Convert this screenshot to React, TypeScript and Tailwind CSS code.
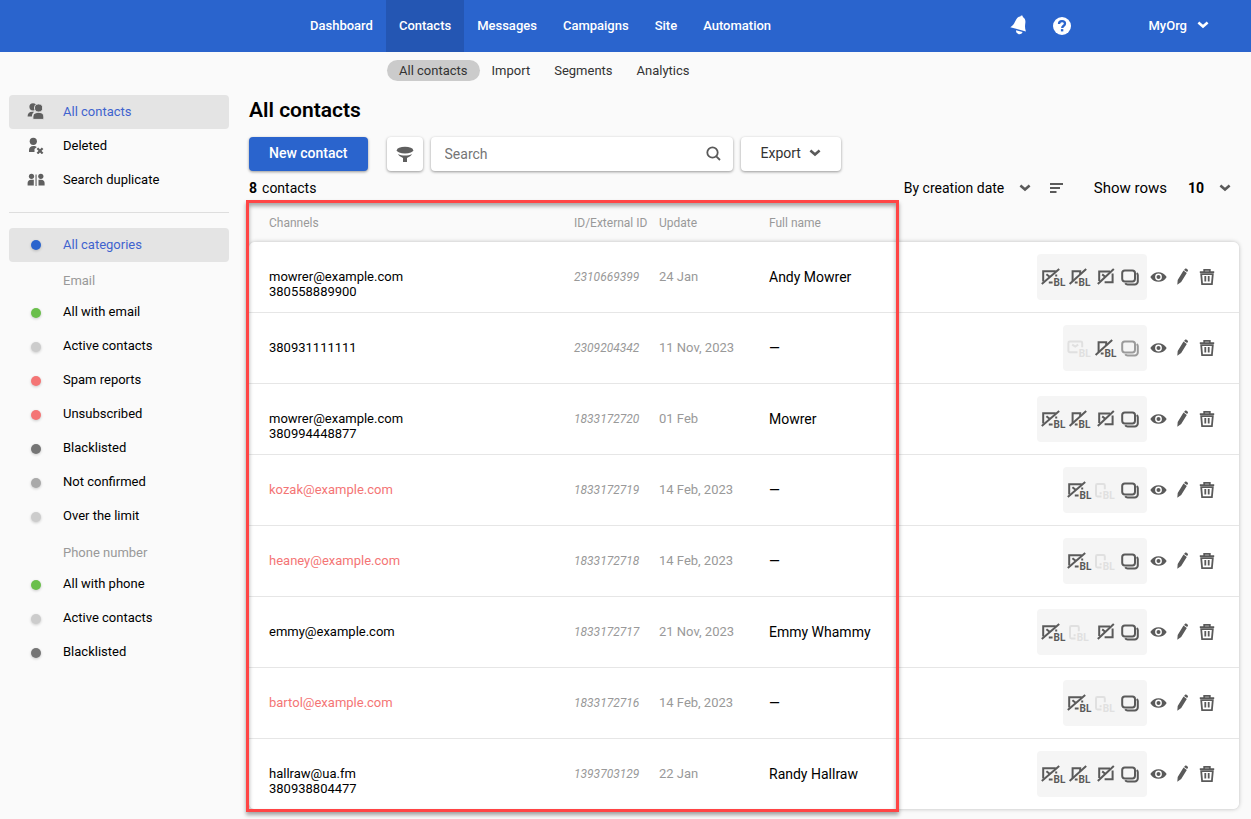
import React from "react";

type Tone = "on" | "off" | "mid";

interface Contact {
  channels: string[];
  id: string;
  updated: string;
  name: string;
  failed?: boolean;
  icons: { kind: "email" | "phone" | "inbox" | "devices"; tone: Tone }[];
}

const full: Contact["icons"] = [
  { kind: "email", tone: "on" },
  { kind: "phone", tone: "on" },
  { kind: "inbox", tone: "on" },
  { kind: "devices", tone: "on" },
];
const emailOnly: Contact["icons"] = [
  { kind: "email", tone: "on" },
  { kind: "phone", tone: "off" },
  { kind: "devices", tone: "on" },
];

const contacts: Contact[] = [
  { channels: ["mowrer@example.com", "380558889900"], id: "2310669399", updated: "24 Jan", name: "Andy Mowrer", icons: full },
  {
    channels: ["380931111111"],
    id: "2309204342",
    updated: "11 Nov, 2023",
    name: "—",
    icons: [
      { kind: "email", tone: "off" },
      { kind: "phone", tone: "on" },
      { kind: "devices", tone: "mid" },
    ],
  },
  { channels: ["mowrer@example.com", "380994448877"], id: "1833172720", updated: "01 Feb", name: "Mowrer", icons: full },
  { channels: ["kozak@example.com"], id: "1833172719", updated: "14 Feb, 2023", name: "—", failed: true, icons: emailOnly },
  { channels: ["heaney@example.com"], id: "1833172718", updated: "14 Feb, 2023", name: "—", failed: true, icons: emailOnly },
  {
    channels: ["emmy@example.com"],
    id: "1833172717",
    updated: "21 Nov, 2023",
    name: "Emmy Whammy",
    icons: [
      { kind: "email", tone: "on" },
      { kind: "phone", tone: "off" },
      { kind: "inbox", tone: "on" },
      { kind: "devices", tone: "on" },
    ],
  },
  { channels: ["bartol@example.com"], id: "1833172716", updated: "14 Feb, 2023", name: "—", failed: true, icons: emailOnly },
  { channels: ["hallraw@ua.fm", "380938804477"], id: "1393703129", updated: "22 Jan", name: "Randy Hallraw", icons: full },
];

const emailCategories = [
  { label: "All with email", dot: "bg-[#6abf4b]" },
  { label: "Active contacts", dot: "bg-[#cccccc]" },
  { label: "Spam reports", dot: "bg-[#f47575]" },
  { label: "Unsubscribed", dot: "bg-[#f47575]" },
  { label: "Blacklisted", dot: "bg-[#757575]" },
  { label: "Not confirmed", dot: "bg-[#a9a9a9]" },
  { label: "Over the limit", dot: "bg-[#cccccc]" },
];
const phoneCategories = [
  { label: "All with phone", dot: "bg-[#6abf4b]" },
  { label: "Active contacts", dot: "bg-[#cccccc]" },
  { label: "Blacklisted", dot: "bg-[#757575]" },
];

function Chevron({ className }: { className?: string }) {
  return (
    <svg viewBox="0 0 12 8" className={className} fill="none" stroke="currentColor" strokeWidth="2.6" aria-hidden="true">
      <path d="M1.4 1.6 6 5.6l4.600-4" />
    </svg>
  );
}

function BL({ x }: { x: number }) {
  return (
    <text x={x} y="20" fontSize="10" fontWeight="700" fontFamily="Roboto, sans-serif" fill="currentColor" stroke="none">
      BL
    </text>
  );
}

function ChannelIcon({ kind, tone }: { kind: string; tone: Tone }) {
  const color = tone === "on" ? "text-[#5a5a5a]" : tone === "mid" ? "text-[#9b9b9b]" : "text-[#e0e0e0]";
  return (
    <svg viewBox="0 0 26 22" className={`h-[22px] w-[26px] ${color}`} fill="none" stroke="currentColor" strokeWidth="2" aria-hidden="true">
      {kind === "email" && tone === "on" && (
        <>
          <path d="M1.8 18 19.2 3" />
          <path d="M3.2 15.600V5.200h12.600M6.400 8.200l3.200 2.600M8.800 16.500h3.800M15.200 9.600h2" />
          <BL x={13.6} />
        </>
      )}
      {kind === "email" && tone === "off" && (
        <>
          <path d="M11.500 15.200H3.800A1.400 1.400 0 0 1 2.400 13.800V6a1.400 1.400 0 0 1 1.400-1.400h11a1.400 1.400 0 0 1 1.400 1.400v4.200M6.200 7.600l3 2 3-2" />
          <BL x={12.8} />
        </>
      )}
      {kind === "phone" && tone === "on" && (
        <>
          <path d="M3.600 18 20.200 3" />
          <path d="M6.600 15V5.200h7.600v3M8.800 16.500h2.800" />
          <BL x={12.6} />
        </>
      )}
      {kind === "phone" && tone === "off" && (
        <>
          <path d="M9.500 17.400H5.400A1.400 1.400 0 0 1 4 16V6.400A1.400 1.400 0 0 1 5.400 5h6a1.400 1.400 0 0 1 1.400 1.400v3.800M7.600 14.200h2" />
          <BL x={10.8} />
        </>
      )}
      {kind === "inbox" && (
        <>
          <path d="M5.800 18 21.800 3" />
          <path d="M7.200 15V5.400h10.800M20.600 7.400v8.800h-8M10.200 8.400l3 2.400" />
        </>
      )}
      {kind === "devices" && (
        <>
          <rect x="4.200" y="4.400" width="12.800" height="11" rx="2.600" />
          <path d="M18.600 7.200c.8.500 1.200 1 1.200 1.900v6.300a3 3 0 0 1-3 3H9.600c-1 0-1.800-.3-2.400-1.200" />
        </>
      )}
    </svg>
  );
}

function RowButton({ label, children }: { label: string; children: React.ReactNode }) {
  return (
    <button type="button" aria-label={label} className="flex h-6 w-6 items-center justify-center text-[#5a5a5a]">
      <svg viewBox="0 0 24 24" className="h-6 w-6" fill="none" stroke="currentColor" aria-hidden="true">
        {children}
      </svg>
    </button>
  );
}

function Category({ label, dot }: { label: string; dot: string }) {
  return (
    <li>
      <a href="#" className="flex h-[34px] items-center pb-[2px] text-black">
        <span className="flex w-[54px] justify-center">
          <span className={`mt-1 h-[10px] w-[10px] rounded-full shadow-[0_1px_3px_rgba(0,0,0,0.2)] ${dot}`} />
        </span>
        {label}
      </a>
    </li>
  );
}

function SideIcon({ children }: { children: React.ReactNode }) {
  return (
    <span className="flex w-[54px] justify-center">
      <svg viewBox="0 0 20 18" className="h-[18px] w-5 text-[#5f5f5f]" fill="currentColor" aria-hidden="true">
        {children}
      </svg>
    </span>
  );
}

export default function App() {
  const th = "h-[37px] p-0 pb-[2px] text-left align-middle font-normal";
  return (
    <div className="min-h-screen bg-[#fafafa] font-[Roboto,sans-serif] text-[13px] leading-[15px] text-black">
      <header className="flex h-[52px] bg-[#2a64cd] pl-[297px] font-medium text-white">
        <nav className="flex" aria-label="Main">
          {["Dashboard", "Contacts", "Messages", "Campaigns", "Site", "Automation"].map((t) => (
            <a key={t} href="#" className={`flex items-center px-[13px] pb-[2px] ${t === "Contacts" ? "bg-[#2456b3]" : ""}`}>
              {t}
            </a>
          ))}
        </nav>
        <div className="ml-auto flex items-center pr-[42px] pb-[2px]">
          <button type="button" aria-label="Notifications" className="mr-6">
            <svg viewBox="0 0 20 20" className="h-5 w-5" fill="currentColor" aria-hidden="true">
              <path d="M12.600.6c.9 0 1.300.6 1.200 1.400 2.400 1.300 2.900 3.600 2.500 6.200-.4 2.800-.5 5 .6 8.200L1.300 12.300c2.500-1.600 3.700-3.200 4.800-5.700C7.200 4 8.600 1.900 11.300 1.600c.2-.6.600-1 1.300-1Z" />
              <path d="M7 15.300l6.600 1.800c-.8 1.800-2.200 2.500-3.900 2.100C8 18.700 7 17.300 7 15.300Z" />
            </svg>
          </button>
          <button type="button" aria-label="Help" className="mt-[2px] mr-[77px]">
            <svg viewBox="0 0 18 18" className="h-[18px] w-[18px]" aria-hidden="true">
              <circle cx="9" cy="9" r="9" fill="white" />
              <path d="M6 7c0-1.700 1.300-2.800 3-2.800s3 1.100 3 2.600c0 2-2.800 2-2.800 4.200" fill="none" stroke="#2a64cd" strokeWidth="2.300" />
              <rect x="7.900" y="12.100" width="2.400" height="2.300" fill="#2a64cd" />
            </svg>
          </button>
          <button type="button" className="flex items-center gap-[10px]">
            MyOrg
            <Chevron className="h-2 w-3" />
          </button>
        </div>
      </header>

      <nav className="flex pt-2 pl-[387px] text-[#333]" aria-label="Contacts">
        {["All contacts", "Import", "Segments", "Analytics"].map((t) => (
          <a key={t} href="#" className={`flex h-[21px] items-center rounded-full px-3 ${t === "All contacts" ? "bg-[#cbcbcb]" : ""}`}>
            {t}
          </a>
        ))}
      </nav>

      <div className="flex gap-5 px-[9px] pt-[14px]">
        <aside className="w-[220px] shrink-0">
          <ul>
            <li>
              <a href="#" className="flex h-[34px] items-center rounded bg-[#e4e4e4] pb-[2px] text-[#3f63cf]">
                <SideIcon>
                  <circle cx="7" cy="4.800" r="3.600" />
                  <path d="M1.600 14.500c0-3.300 1.600-4.800 4.800-4.800h1.800c-1.600 1.200-2.200 2.700-2.300 4.800Z" />
                  <g stroke="#e4e4e4">
                    <circle cx="12.600" cy="6" r="4.100" />
                    <path d="M6.900 17.400v-2.200c0-3 1.800-4.800 5.700-4.800s5.200 1.800 5.200 4.800v2.200Z" />
                  </g>
                </SideIcon>
                All contacts
              </a>
            </li>
            <li>
              <a href="#" className="flex h-[34px] items-center pb-[2px]">
                <SideIcon>
                  <circle cx="7.300" cy="5.300" r="3.600" />
                  <path d="M3 16v-1.800c0-2.700 1.500-4.300 4.500-4.300 1.500 0 2.600.4 3.400 1.100L8.500 13v3Z" />
                  <path d="m11.400 12.300 5.200 5.200m0-5.200-5.200 5.200" stroke="currentColor" strokeWidth="2.200" />
                </SideIcon>
                Deleted
              </a>
            </li>
            <li>
              <a href="#" className="flex h-[34px] items-center pb-[2px]">
                <SideIcon>
                  <circle cx="5.500" cy="6.300" r="2.600" />
                  <path d="M1.600 15.500v-2.400c0-2 1.300-3.300 3.500-3.300h2.700v5.700Z" />
                  <path d="M9.500 4.500h1.100v11.500H9.500Z" />
                  <circle cx="14.800" cy="6.300" r="2.600" />
                  <path d="M12.500 15.500V9.800h2.600c2.300 0 3.500 1.300 3.500 3.300v2.400Z" />
                </SideIcon>
                Search duplicate
              </a>
            </li>
          </ul>
          <hr className="my-[15px] border-[#dedede]" />
          <ul>
            <li>
              <a href="#" className="flex h-[34px] items-center rounded bg-[#e4e4e4] pb-[2px] text-[#3f63cf]">
                <span className="flex w-[54px] justify-center">
                  <span className="mt-[2px] h-[10px] w-[10px] rounded-full bg-[#2a64cd] shadow-[0_1px_3px_rgba(0,0,0,0.2)]" />
                </span>
                All categories
              </a>
            </li>
          </ul>
          <h2 className="flex h-[33px] items-center pt-1 pl-[54px] text-[#999]">Email</h2>
          <ul>
            {emailCategories.map((c) => (
              <Category key={c.label} {...c} />
            ))}
          </ul>
          <h2 className="flex h-[34px] items-center pt-1 pl-[54px] text-[#999]">Phone number</h2>
          <ul>
            {phoneCategories.map((c) => (
              <Category key={c.label} {...c} />
            ))}
          </ul>
        </aside>

        <main className="min-w-0 flex-1 pr-[3px]">
          <h1 className="pt-[3px] text-[21px] leading-6 font-semibold">All contacts</h1>
          <div className="mt-[15px] flex text-sm">
            <button type="button" className="h-[34px] rounded bg-[#2a64cd] px-5 pb-[2px] font-medium text-white shadow-[0_1px_3px_rgba(0,0,0,0.4)]">
              New contact
            </button>
            <button
              type="button"
              aria-label="Filter"
              className="ml-[19px] flex h-[34px] w-9 items-center justify-center rounded bg-white shadow-[0_1px_3px_rgba(0,0,0,0.4)]"
            >
              <svg viewBox="0 0 18 18" className="h-[18px] w-[18px] text-[#5f5f5f]" fill="currentColor" aria-hidden="true">
                <ellipse cx="9" cy="5.200" rx="8.200" ry="3.400" />
                <path d="M2 9c2 1.100 4.300 1.500 7 1.500s5-.4 7-1.500c-.9 1.700-2.500 2.900-5 3.900v4.100H7v-4.100C4.500 11.900 2.900 10.700 2 9Z" />
              </svg>
            </button>
            <label className="ml-2 flex h-[34px] w-[302px] items-center rounded bg-white pr-3 pl-[14px] shadow-[0_1px_3px_rgba(0,0,0,0.4)]">
              <input type="search" aria-label="Search" placeholder="Search" className="min-w-0 flex-1 outline-none placeholder:text-[#757575]" />
              <svg viewBox="0 0 16 16" className="h-4 w-4 text-[#5a5a5a]" fill="none" stroke="currentColor" strokeWidth="1.800" aria-hidden="true">
                <circle cx="7.500" cy="6.500" r="5.200" />
                <path d="m11.300 10.300 3.700 3.700" />
              </svg>
            </label>
            <button
              type="button"
              className="ml-2 flex h-[34px] items-center gap-2 rounded bg-white px-5 pb-[2px] text-[#333] shadow-[0_1px_3px_rgba(0,0,0,0.4)]"
            >
              Export
              <Chevron className="h-2 w-3 text-[#5a5a5a]" />
            </button>
          </div>

          <div className="mt-[7px] flex h-5 items-center pr-2 text-sm">
            <p className="flex gap-[5px]">
              <b className="font-bold">8</b> contacts
            </p>
            <div className="relative ml-auto flex items-center">
              <select aria-label="Sort by" className="w-[127px] appearance-none bg-transparent outline-none">
                <option>By creation date</option>
              </select>
              <Chevron className="pointer-events-none absolute right-0 h-2 w-3 text-[#5a5a5a]" />
            </div>
            <button type="button" aria-label="Sort order" className="ml-[19px]">
              <svg viewBox="0 0 14 12" className="h-3 w-[14px] text-[#5a5a5a]" fill="currentColor" aria-hidden="true">
                <path d="M0 1h13v2H0zM0 5h10v2H0zM0 9h6.500v2H0z" />
              </svg>
            </button>
            <label htmlFor="rows" className="ml-[30px] text-[15px] leading-5">
              Show rows
            </label>
            <div className="relative ml-[21px] flex items-center">
              <select id="rows" className="w-[43px] appearance-none bg-transparent font-bold outline-none">
                <option>10</option>
              </select>
              <Chevron className="pointer-events-none absolute right-0 h-2 w-3 text-[#5a5a5a]" />
            </div>
          </div>

          <div className="relative mt-[7px] mb-[9px]">
            <table className="w-full table-fixed border-separate border-spacing-0">
              <colgroup>
                <col className="w-[325px]" />
                <col className="w-[85px]" />
                <col className="w-[110px]" />
                <col />
                <col className="w-[202px]" />
              </colgroup>
              <thead className="text-xs text-[#999]">
                <tr>
                  <th className="h-[37px] p-0 pb-[2px] pl-5 text-left align-middle font-normal">Channels</th>
                  <th className={th}>ID/External ID</th>
                  <th className={th}>Update</th>
                  <th className={th}>Full name</th>
                  <td />
                </tr>
              </thead>
              <tbody className="rounded-md shadow-[0_0_4px_rgba(0,0,0,0.25)]">
                {contacts.map((c) => (
                  <tr
                    key={c.id}
                    className="[&>td]:h-[71px] [&>td]:border-b [&>td]:border-[#e6e6e6] [&>td]:bg-white [&>td]:pt-[27px] [&>td]:align-top last:[&>td]:h-[70px] last:[&>td]:border-b-0 first:[&>td:first-child]:rounded-tl-md first:[&>td:last-child]:rounded-tr-md last:[&>td:first-child]:rounded-bl-md last:[&>td:last-child]:rounded-br-md"
                  >
                    <td className={`pl-5 ${c.failed ? "text-[#f47575]" : ""}`}>
                      {c.channels.map((ch) => (
                        <div key={ch}>{ch}</div>
                      ))}
                    </td>
                    <td className="text-xs leading-4 text-[#999] italic">{c.id}</td>
                    <td className="text-[#999]">{c.updated}</td>
                    <td className="text-sm leading-4">{c.name}</td>
                    <td>
                      <div className="-mt-[15px] flex items-center justify-end pr-5">
                        <div className="flex h-[46px] items-center rounded bg-[#f5f5f5] px-[3px]">
                          {c.icons.map((i) => (
                            <ChannelIcon key={i.kind} kind={i.kind} tone={i.tone} />
                          ))}
                        </div>
                        <RowButton label="View">
                          <path
                            fill="currentColor"
                            stroke="none"
                            fillRule="evenodd"
                            d="M3.300 12C5.300 8.700 8.200 7.200 11.500 7.200s6.200 1.500 8.200 4.800c-2 3.300-4.900 4.800-8.200 4.800S5.300 15.300 3.300 12ZM11.500 8.600a3.400 3.400 0 1 0 0 6.800 3.400 3.400 0 0 0 0-6.800Z"
                          />
                          <circle cx="11.500" cy="12" r="2" fill="currentColor" stroke="none" />
                        </RowButton>
                        <RowButton label="Edit">
                          <path
                            fill="currentColor"
                            stroke="none"
                            d="m13 4.900.9-1c.5-.5 1.100-.5 1.700-.1l.9.600c.6.400.7 1 .3 1.600l-.7 1.100ZM12.500 5.600l3.300 2.300-5.600 9-3.900 2.900.4-4.800Z"
                          />
                        </RowButton>
                        <RowButton label="Delete">
                          <path strokeWidth="1.800" d="M4.800 7.200h14.400M9.200 6.800V4.800h5.600v2M6.200 9.200l.9 9.900h9.800l.9-9.900ZM10.300 11v5.600M13.700 11v5.600" />
                        </RowButton>
                      </div>
                    </td>
                  </tr>
                ))}
              </tbody>
            </table>
            <div className="pointer-events-none absolute -top-[5px] -bottom-[3px] -left-[3px] w-[653px] border-3 border-[#ff4545] shadow-[0_3px_4px_rgba(0,0,0,0.35),inset_0_3px_4px_rgba(0,0,0,0.35)]" />
          </div>
        </main>
      </div>
    </div>
  );
}
